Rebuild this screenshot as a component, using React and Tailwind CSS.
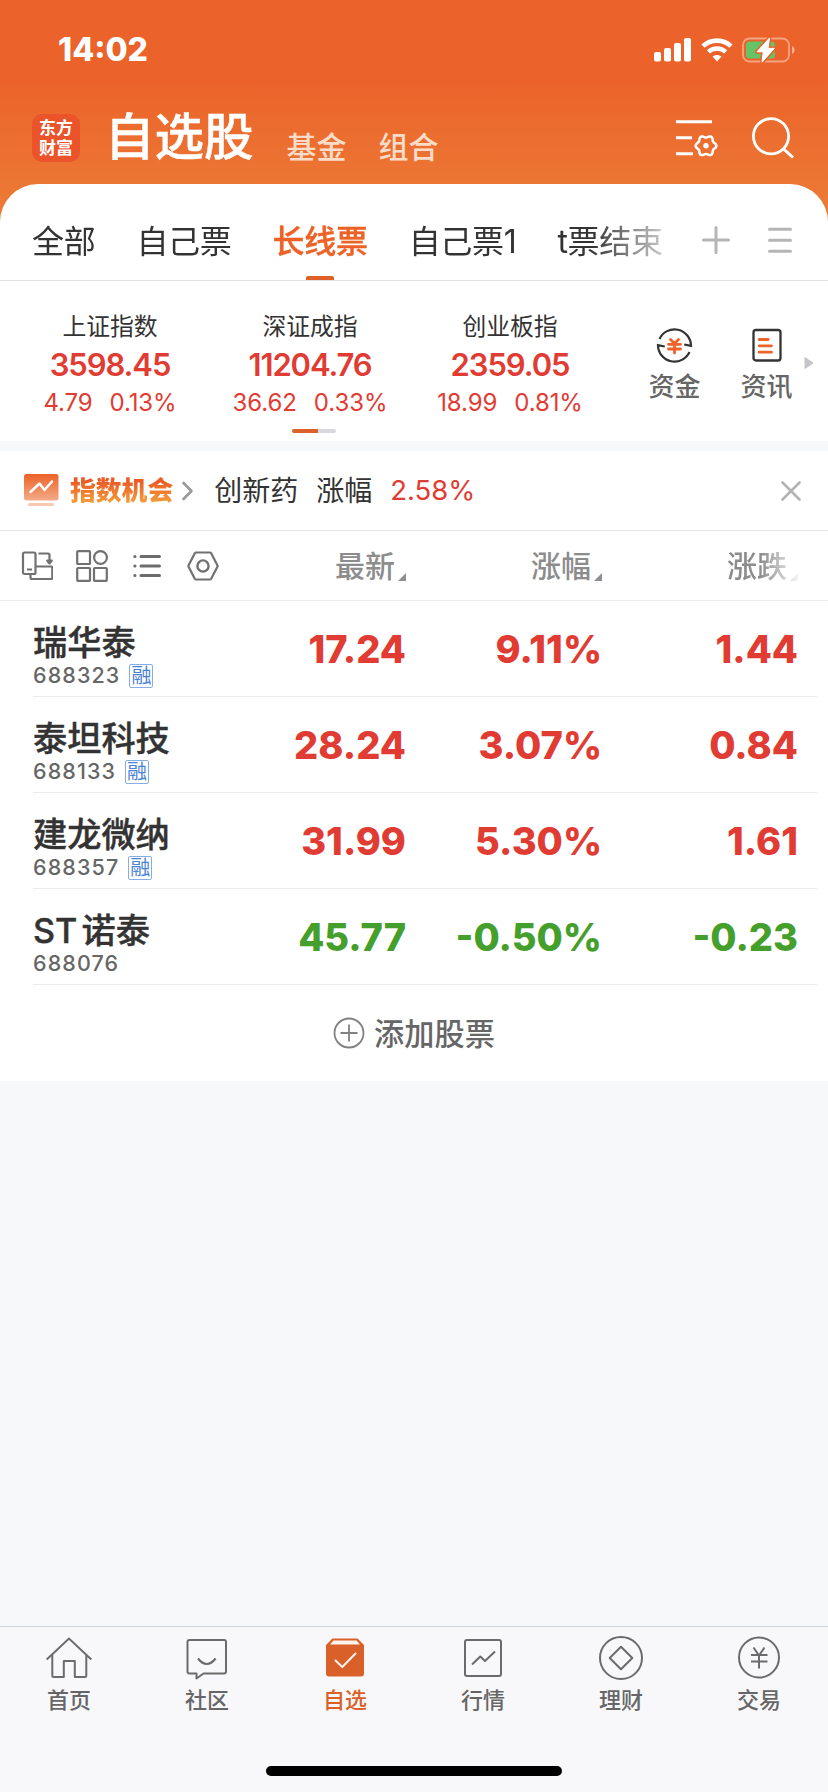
import React from "react";

const RED = "text-[#e03c33]";
const GREEN = "text-[#459f2c]";

const tabs = [
  { label: "全部" },
  { label: "自己票" },
  { label: "长线票", active: true },
  { label: "自己票1" },
  { label: "t票结束" },
];

const indices = [
  { name: "上证指数", value: "3598.45", change: "4.79", pct: "0.13%" },
  { name: "深证成指", value: "11204.76", change: "36.62", pct: "0.33%" },
  { name: "创业板指", value: "2359.05", change: "18.99", pct: "0.81%" },
];

const stocks = [
  { name: "瑞华泰", code: "688323", margin: true, price: "17.24", pct: "9.11%", diff: "1.44" },
  { name: "泰坦科技", code: "688133", margin: true, price: "28.24", pct: "3.07%", diff: "0.84" },
  { name: "建龙微纳", code: "688357", margin: true, price: "31.99", pct: "5.30%", diff: "1.61" },
  { name: "ST 诺泰", code: "688076", margin: false, price: "45.77", pct: "-0.50%", diff: "-0.23" },
];

// six-lobed outline of the settings gear
const gearPoints = Array.from({ length: 72 }, (_, i) => {
  const a = (i * Math.PI) / 36;
  const r = 9.3 + 1.1 * Math.cos(6 * a);
  return `${(30 + r * Math.cos(a)).toFixed(2)},${(26.8 + r * Math.sin(a)).toFixed(2)}`;
}).join(" ");

const SignalIcon = () => (
  <svg width="37" height="24" viewBox="0 0 37 24" fill="white">
    <rect x="0" y="14" width="7" height="9.5" rx="2" />
    <rect x="10" y="10" width="7" height="13.5" rx="2" />
    <rect x="20" y="5" width="7" height="18.5" rx="2" />
    <rect x="30" y="0" width="7" height="23.5" rx="2" />
  </svg>
);

const WifiIcon = () => (
  <svg width="32" height="24" viewBox="0 0 32 24" fill="none" stroke="white">
    <path d="M2 8.2C9.8 .7 22.2 .7 30 8.2" strokeWidth="4.6" />
    <path d="M7.3 13.8c4.9-4.5 12.5-4.5 17.4 0" strokeWidth="4.4" />
    <path d="M11.5 18.6c2.6-2.3 6.400-2.300 9 0L16 23.400z" fill="white" stroke="none" />
  </svg>
);

const BatteryIcon = () => (
  <svg width="54" height="28" viewBox="0 0 54 28" fill="none">
    <rect x="1" y="2.500" width="46" height="23" rx="6.500" stroke="white" strokeOpacity="0.42" strokeWidth="1.800" />
    <path d="M50 10v8c3.400-1.300 3.400-6.700 0-8z" fill="white" fillOpacity="0.5" />
    <rect x="4" y="5.500" width="29" height="17" rx="3.500" fill="#65c466" />
    <path
      d="M27.500 2 15 15.800h6.300L20 26.200 32.300 12.400H26z"
      fill="white"
      stroke="#eb632a"
      strokeWidth="4"
      strokeLinejoin="round"
      paintOrder="stroke"
    />
    <path d="M27.500 2 15 15.800h6.300L20 26.200 32.300 12.400H26z" fill="white" stroke="white" strokeLinejoin="round" />
  </svg>
);

const FilterGearIcon = () => (
  <svg width="42" height="38" viewBox="0 0 42 38" fill="none" stroke="white" strokeWidth="3">
    <path d="M0 2.700h36M0 18.800h16M0 34.800h17" />
    <polygon points={gearPoints} strokeWidth="2.500" strokeLinejoin="round" />
    <circle cx="30" cy="26.800" r="2.700" fill="white" stroke="none" />
  </svg>
);

const SearchIcon = () => (
  <svg width="44" height="44" viewBox="0 0 44 44" fill="none" stroke="white" strokeWidth="2.800">
    <circle cx="20" cy="20.300" r="17.600" />
    <path d="m32.500 32.800 9.500 8.700" strokeWidth="3" />
  </svg>
);

const FundIcon = () => (
  <svg width="37" height="37" viewBox="0 0 37 37" fill="none" stroke="#333" strokeWidth="2.200">
    <path d="M3.500 12A16.500 16.500 0 0 1 35 18.800l-6.800-1.300" />
    <path d="M33.500 25A16.500 16.500 0 0 1 2 18.200l6.800 1.300" />
    <path d="m14.500 12.500 4 4 4-4M12.500 17.300h12M12.500 22h12M18.500 17v9" stroke="#ee6428" strokeWidth="2.800" strokeLinecap="round" />
  </svg>
);

const NewsIcon = () => (
  <svg width="30" height="34" viewBox="0 0 30 34" fill="none">
    <rect x="1.500" y="2" width="27" height="30.500" rx="2.500" stroke="#333" strokeWidth="2.300" />
    <path d="M7.200 11.500h9M7.200 17.800h12.300M7.200 24.200h12.300" stroke="#ee6428" strokeWidth="2.800" strokeLinecap="round" />
  </svg>
);

const TrendBadgeIcon = () => (
  <svg width="35" height="34" viewBox="0 0 35 34" fill="none">
    <defs>
      <linearGradient id="trend" x1="0" y1="0" x2="0" y2="1">
        <stop offset="0" stopColor="#ec6127" />
        <stop offset="1" stopColor="#f4ab88" />
      </linearGradient>
    </defs>
    <rect width="34.500" height="26.500" rx="2.500" fill="url(#trend)" />
    <path d="m6.500 18 9-8.500 5 6.500 7.500-8.500" stroke="white" strokeWidth="2.500" strokeLinecap="round" strokeLinejoin="round" />
    <path d="M5.500 30.500h23" stroke="#f8c9ae" strokeWidth="3" strokeLinecap="round" />
  </svg>
);

const RotateIcon = () => (
  <svg width="32" height="30" viewBox="0 0 32 30" fill="none" stroke="#717171" strokeWidth="2.200" strokeLinejoin="round">
    <rect x="2" y="1.500" width="12.500" height="21.500" rx="1.500" />
    <path d="M6 18.500h5M17.500 2.500H27q1.500 0 1.500 1.500V9M15 15.500h15q1.300 0 1.300 1.500v9.500q0 1.500-1.300 1.500H11q-1.500 0-1.500-1.500V23" />
    <path d="M26.200 9.500h4.600l-2.300 3z" fill="#717171" />
  </svg>
);

const GridIcon = () => (
  <svg width="32" height="32" viewBox="0 0 32 32" fill="none" stroke="#717171" strokeWidth="2.200">
    <rect x="1.200" y="1.200" width="12.800" height="12.800" rx="0.800" />
    <circle cx="24.500" cy="7.500" r="6.400" />
    <rect x="1.200" y="18" width="12.800" height="12.800" rx="0.800" />
    <rect x="18" y="18" width="12.800" height="12.800" rx="0.800" />
  </svg>
);

const ListIcon = () => (
  <svg width="30" height="26" viewBox="0 0 30 26" fill="none" stroke="#6c6c6c" strokeWidth="3" strokeLinecap="round">
    <path d="M9 3.500h18.500M9 13h18.500M9 22.500h18.500M2.800 3.500h.2M2.800 13h.2M2.800 22.500h.2" />
  </svg>
);

const HexIcon = () => (
  <svg width="32" height="30" viewBox="0 0 32 30" fill="none" stroke="#717171" strokeWidth="2.200" strokeLinejoin="round">
    <path d="M9 1.500h14q.8 0 1.200.7l6.200 12q.4.800 0 1.600l-6.200 12q-.4.700-1.200.7H9q-.8 0-1.200-.7l-6.200-12q-.4-.8 0-1.600l6.200-12q.4-.7 1.200-.7z" />
    <circle cx="16" cy="15" r="5.600" strokeWidth="2.400" />
  </svg>
);

const HomeIcon = () => (
  <svg width="46" height="46" viewBox="0 0 46 46" fill="none" stroke="#6b6b6b" strokeWidth="2">
    <path d="M.700 23.500 23 2.500l22.300 21" />
    <path d="M6.300 19v20.500q0 1.500 1.500 1.500h10V25h11v16h10q1.500 0 1.500-1.500V19" strokeLinejoin="round" />
  </svg>
);

const CommunityIcon = () => (
  <svg width="46" height="46" viewBox="0 0 46 46" fill="none" stroke="#6b6b6b" strokeWidth="2" strokeLinejoin="round">
    <path d="M5.500 4h34.500q2 0 2 2v29.500q0 2-2 2H19.500L12.500 42.500v-5h-7q-2 0-2-2V6q0-2 2-2z" />
    <path d="M14 22.500q8.800 11 17.600 0" strokeWidth="2.200" />
  </svg>
);

const WatchlistIcon = () => (
  <svg width="46" height="46" viewBox="0 0 46 46" fill="none">
    <path d="M10.500 2.500h25L42 9v28.500q0 3-3 3H7q-3 0-3-3V9z" fill="#d96028" />
    <path d="M11.500 4.500h23l3.500 4H8z" fill="#fdf3ee" />
    <path d="m13.500 24.500 6.800 6.500 13.200-13.500" stroke="#fdf3ee" strokeWidth="2" strokeLinecap="round" strokeLinejoin="round" />
  </svg>
);

const MarketIcon = () => (
  <svg width="46" height="46" viewBox="0 0 46 46" fill="none" stroke="#6b6b6b" strokeWidth="2" strokeLinejoin="round">
    <rect x="5" y="4" width="36" height="36" rx="2" />
    <path d="m12 28.500 8.300-8 4.700 4.500 10-9.500" />
  </svg>
);

const WealthIcon = () => (
  <svg width="46" height="46" viewBox="0 0 46 46" fill="none" stroke="#6b6b6b" strokeWidth="2" strokeLinejoin="round">
    <circle cx="23" cy="22" r="21" />
    <path d="M23 10.700 34.300 22 23 33.300 11.700 22z" />
  </svg>
);

const TradeIcon = () => (
  <svg width="46" height="46" viewBox="0 0 46 46" fill="none" stroke="#6b6b6b" strokeWidth="2">
    <circle cx="23" cy="21.500" r="20" />
    <path d="m17.500 11.500 5.500 8 5.500-8M15 19h16.500M15 25.500h16.500M23 19v13.500" />
  </svg>
);

const navItems = [
  { label: "首页", Icon: HomeIcon },
  { label: "社区", Icon: CommunityIcon },
  { label: "自选", Icon: WatchlistIcon, active: true },
  { label: "行情", Icon: MarketIcon },
  { label: "理财", Icon: WealthIcon },
  { label: "交易", Icon: TradeIcon },
];

const SortMark = () => (
  <svg className="ml-[3px] mt-[22px]" width="8" height="8" viewBox="0 0 8 8">
    <path d="M8 0v8H0z" fill="#8e8e93" />
  </svg>
);

const StatusBar = () => (
  <div className="flex h-[100px] items-center pl-[58px] pr-[32px] text-white">
    <span className="text-[32px] font-extrabold leading-none">14:02</span>
    <div className="ml-auto flex items-center">
      <SignalIcon />
      <span className="ml-[10px]">
        <WifiIcon />
      </span>
      <span className="ml-[9px]">
        <BatteryIcon />
      </span>
    </div>
  </div>
);

const TitleBar = () => (
  <div className="mb-2 flex h-[76px] items-center pl-8 pr-[33px]">
    <div className="flex h-12 w-12 flex-col items-center justify-center rounded-[10px] bg-[#eb532b] text-[17px] font-bold leading-[20px] text-white">
      <span>东方</span>
      <span>财富</span>
    </div>
    <h1 className="ml-[25px] text-[49.500px] font-medium leading-none text-white [-webkit-text-stroke:0.5px]">自选股</h1>
    <span className="ml-[33px] mt-[17px] text-[30px] font-medium leading-none text-[#fbdcc9]">基金</span>
    <span className="ml-[32px] mt-[17px] text-[30px] font-medium leading-none text-[#fbdcc9]">组合</span>
    <div className="ml-auto flex items-center gap-[33px]">
      <FilterGearIcon />
      <SearchIcon />
    </div>
  </div>
);

const GroupTabs = () => (
  <div className="flex h-[97px] items-stretch rounded-t-[38px] border-b border-[#e2e2e4] bg-white pl-8">
    <div className="flex w-[640px] gap-[41px] overflow-hidden whitespace-nowrap tracking-[-0.300px] [mask-image:linear-gradient(to_right,black_560px,transparent_656px)]">
      {tabs.map((tab) => (
        <div
          key={tab.label}
          className={
            tab.active
              ? "flex flex-col items-center text-[32px] font-medium text-[#ec6227] [-webkit-text-stroke:0.400px]"
              : "flex flex-col items-center text-[32px] text-[#333]"
          }
        >
          <span className="mt-[38px] leading-[40px]">{tab.label}</span>
          {tab.active && <span className="mt-auto h-1 w-7 rounded-t-[2px] bg-[#e0602a]" />}
        </div>
      ))}
    </div>
    <svg className="ml-[30px] mt-[42px]" width="28" height="28" viewBox="0 0 28 28" stroke="#b5b5b5" strokeWidth="3" strokeLinecap="round">
      <path d="M14 1.500v25M1.500 14h25" />
    </svg>
    <svg className="ml-[38px] mt-[42px]" width="24" height="28" viewBox="0 0 24 28" stroke="#b5b5b5" strokeWidth="3" strokeLinecap="round">
      <path d="M1.500 3.300h21M1.500 14.300h21M1.500 25.300h21" />
    </svg>
  </div>
);

const IndexPanel = () => (
  <div className="flex h-[160px] bg-white pl-[10px]">
    <div className="flex w-[600px] flex-col">
      <div className="grid grid-cols-3 pt-[29px]">
        {indices.map((item) => (
          <div key={item.name} className="flex flex-col items-center">
            <span className="text-[23.800px] leading-[34px] text-[#333]">{item.name}</span>
            <span className={`mt-[2px] text-[31px] font-semibold leading-[38px] tracking-[-1.100px] ${RED}`}>{item.value}</span>
            <span className={`mt-[2px] flex gap-[17px] text-[24px] leading-[34px] tracking-[-0.100px] ${RED}`}>
              <span>{item.change}</span>
              <span>{item.pct}</span>
            </span>
          </div>
        ))}
      </div>
      <div className="ml-[282px] mt-[9px] flex h-1 w-11 overflow-hidden rounded-full bg-[#d8d8de]">
        <div className="w-[26px] bg-[#dc6029]" />
      </div>
    </div>
    <div className="ml-[29px] flex w-[71px] flex-col items-center pt-[46px]">
      <FundIcon />
      <span className="mt-[8px] text-[26px] font-medium leading-[30px] text-[#666]">资金</span>
    </div>
    <div className="ml-[21px] flex w-[71px] flex-col items-center pt-[47px]">
      <NewsIcon />
      <span className="mt-[10px] text-[26px] font-medium leading-[30px] text-[#666]">资讯</span>
    </div>
    <svg className="ml-[2px] mt-[75px]" width="10" height="14" viewBox="0 0 10 14">
      <path d="M1 1.500v11L9 7z" fill="#c4c4c8" stroke="#c4c4c8" strokeLinejoin="round" />
    </svg>
  </div>
);

const OpportunityBar = () => (
  <div className="mt-[10px] flex h-[80px] items-center border-b border-[#e4e4e6] bg-white pl-6 pr-[27px]">
    <TrendBadgeIcon />
    <span className="ml-[11px] mt-px bg-gradient-to-b from-[#ea5b26] from-20% to-[#f5a03c] to-90% bg-clip-text text-[25.800px] font-black leading-[32px] text-transparent">
      指数机会
    </span>
    <svg className="ml-[8px]" width="14" height="20" viewBox="0 0 14 20" fill="none" stroke="#999" strokeWidth="2.600" strokeLinecap="round" strokeLinejoin="round">
      <path d="m2.500 2 8 8-8 8" />
    </svg>
    <span className="ml-[19px] mt-px text-[28px] leading-none text-[#333]">创新药</span>
    <span className="ml-[18px] mt-px text-[28px] leading-none text-[#333]">涨幅</span>
    <span className={`ml-[18px] mt-px text-[27.500px] leading-none ${RED}`}>2.58%</span>
    <svg className="ml-auto" width="20" height="20" viewBox="0 0 20 20" stroke="#b3b3b3" strokeWidth="2.600" strokeLinecap="round">
      <path d="m1.500 1.500 17 17M18.500 1.500l-17 17" />
    </svg>
  </div>
);

const TableHeader = () => (
  <div className="flex h-[70px] items-center border-b border-[#ececee] bg-white pl-[21px] text-[30px] font-medium leading-none text-[#8c8c8c]">
    <div className="flex w-[199px] items-center">
      <RotateIcon />
      <span className="ml-[23px]">
        <GridIcon />
      </span>
      <span className="ml-[24px]">
        <ListIcon />
      </span>
      <span className="ml-[25px]">
        <HexIcon />
      </span>
    </div>
    <div className="flex w-[186px] items-center justify-end">
      最新
      <SortMark />
    </div>
    <div className="flex w-[196px] items-center justify-end">
      涨幅
      <SortMark />
    </div>
    <div className="flex w-[196px] items-center justify-end [mask-image:linear-gradient(to_right,black_158px,transparent_200px)]">
      涨跌
      <SortMark />
    </div>
  </div>
);

const StockRow = ({ stock }) => {
  const color = stock.diff.startsWith("-") ? GREEN : RED;

  return (
    <div className="ml-[33px] mr-[11px] flex h-[96px] border-b border-[#ebebed]">
      <div className="w-[196px] pt-[22px]">
        <div className="whitespace-nowrap text-[34.200px] font-medium leading-[40px] text-[#333] [-webkit-text-stroke:0.400px] [word-spacing:-5px]">
          {stock.name}
        </div>
        <div className="-mt-px flex h-[28px] items-center">
          <span className="text-[21.500px] font-medium leading-none tracking-[1.100px] text-[#666]">{stock.code}</span>
          {stock.margin && (
            <span className="ml-[9px] flex h-6 w-6 items-center justify-center rounded-[2px] border border-[#86aee6] text-[20px] leading-none text-[#4a83d6]">
              融
            </span>
          )}
        </div>
      </div>
      <div className={`flex items-center text-right text-[38px] font-extrabold leading-none ${color}`}>
        <span className="w-[177px]">{stock.price}</span>
        <span className="w-[196px]">{stock.pct}</span>
        <span className="w-[196px]">{stock.diff}</span>
      </div>
    </div>
  );
};

const BottomNav = () => (
  <nav className="mt-auto flex h-[166px] flex-col border-t border-[#d3d3de] bg-[#f8f8fa]">
    <div className="grid grid-cols-6 pt-[9px]">
      {navItems.map(({ label, Icon, active }) => (
        <div key={label} className="flex flex-col items-center">
          <Icon />
          <span
            className={
              active
                ? "mt-[3px] text-[22px] font-medium leading-[30px] text-[#d96028]"
                : "mt-[3px] text-[22px] font-medium leading-[30px] text-[#666]"
            }
          >
            {label}
          </span>
        </div>
      ))}
    </div>
    <div className="mx-auto mb-4 mt-auto h-[10px] w-[296px] rounded-full bg-black" />
  </nav>
);

export default function App() {
  return (
    <div className="flex h-[1792px] w-[828px] flex-col overflow-hidden bg-[#f7f8fa] font-[Inter,'Noto_Sans_CJK_SC',sans-serif]">
      <header className="bg-[linear-gradient(to_bottom,#eb622a_75px,#ec7935_200px)]">
        <StatusBar />
        <TitleBar />
        <GroupTabs />
      </header>
      <IndexPanel />
      <OpportunityBar />
      <TableHeader />
      <div className="bg-white">
        {stocks.map((stock) => (
          <StockRow key={stock.code} stock={stock} />
        ))}
        <div className="flex h-[96px] items-center justify-center text-[30.200px] font-medium leading-none text-[#666]">
          <svg className="mr-[9px]" width="32" height="32" viewBox="0 0 32 32" fill="none" stroke="#808080" strokeWidth="1.800">
            <circle cx="16" cy="16" r="14.500" />
            <path d="M16 7.500v17M7.500 16h17" />
          </svg>
          <span className="mt-[2px]">添加股票</span>
        </div>
      </div>
      <BottomNav />
    </div>
  );
}
